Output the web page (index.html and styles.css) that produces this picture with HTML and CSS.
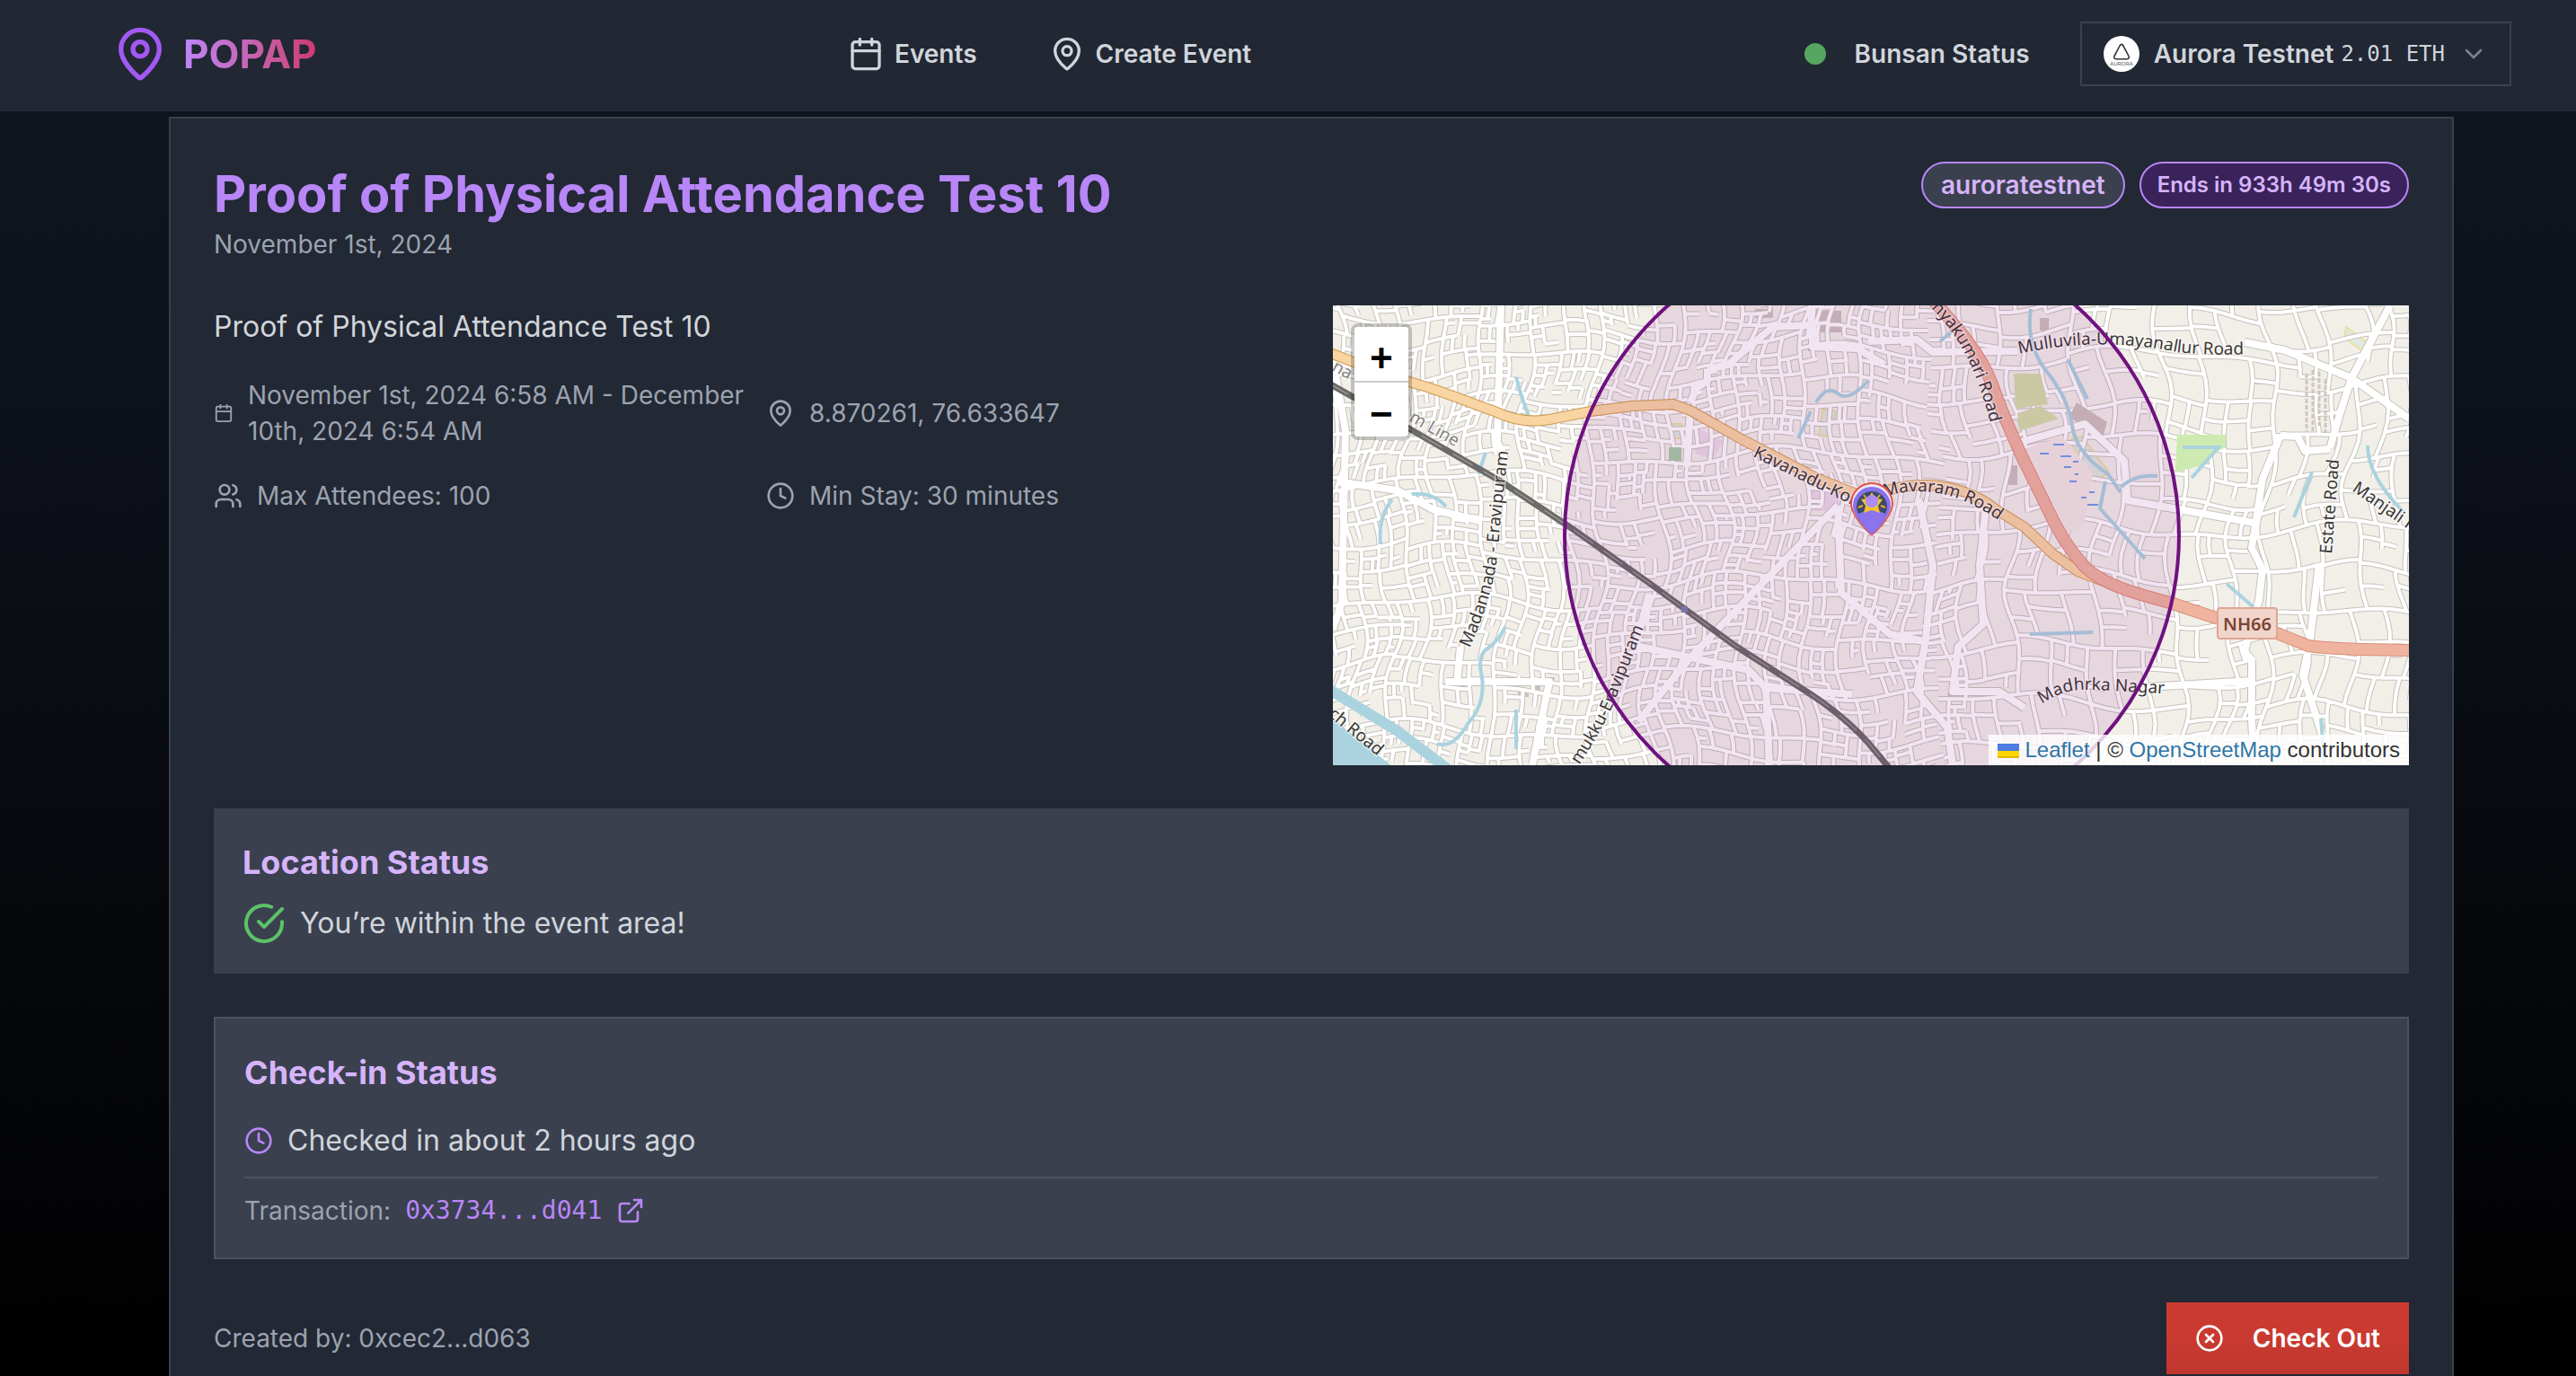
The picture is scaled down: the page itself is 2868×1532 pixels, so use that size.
FILE: index.html
```html
<!DOCTYPE html>
<html lang="en">
<head>
<meta charset="utf-8">
<meta name="viewport" content="width=device-width, initial-scale=1">
<title>POPAP – Proof of Physical Attendance Test 10</title>
<link rel="stylesheet" href="styles.css">
</head>
<body>
<svg class="sprite" aria-hidden="true">
  <symbol id="i-pin" viewBox="0 0 24 24"><path d="M20 10c0 4.993-5.539 10.193-7.399 11.799a1 1 0 0 1-1.202 0C9.539 20.193 4 14.993 4 10a8 8 0 0 1 16 0"/><circle cx="12" cy="10" r="3"/></symbol>
  <symbol id="i-calendar" viewBox="0 0 24 24"><path d="M8 2v4M16 2v4M3 10h18"/><rect x="3" y="4" width="18" height="18" rx="2"/></symbol>
  <symbol id="i-clock" viewBox="0 0 24 24"><circle cx="12" cy="12" r="10"/><path d="M12 6v6l4 2"/></symbol>
  <symbol id="i-users" viewBox="0 0 24 24"><path d="M16 21v-2a4 4 0 0 0-4-4H6a4 4 0 0 0-4 4v2"/><circle cx="9" cy="7" r="4"/><path d="M22 21v-2a4 4 0 0 0-3-3.87M16 3.13a4 4 0 0 1 0 7.75"/></symbol>
  <symbol id="i-check" viewBox="0 0 24 24"><path d="M22 11.08V12a10 10 0 1 1-5.93-9.14"/><path d="m9 11 3 3L22 4"/></symbol>
  <symbol id="i-external" viewBox="0 0 24 24"><path d="M15 3h6v6M10 14 21 3M18 13v6a2 2 0 0 1-2 2H5a2 2 0 0 1-2-2V8a2 2 0 0 1 2-2h6"/></symbol>
  <symbol id="i-x" viewBox="0 0 24 24"><circle cx="12" cy="12" r="10"/><path d="m15 9-6 6M9 9l6 6"/></symbol>
  <symbol id="i-chevron" viewBox="0 0 24 24"><path d="m6 9 6 6 6-6"/></symbol>
</svg>

<header class="topbar">
  <a class="logo" href="#"><svg class="icon logo-icon"><use href="#i-pin"/></svg><span class="logo-text">POPAP</span></a>
  <nav class="nav">
    <a class="nav-link" href="#events"><svg class="icon icon-nav"><use href="#i-calendar"/></svg>Events</a>
    <a class="nav-link" href="#create"><svg class="icon icon-nav"><use href="#i-pin"/></svg>Create Event</a>
  </nav>
  <div class="tools">
    <button class="status" type="button"><span class="dot"></span>Bunsan Status</button>
    <button class="network" type="button">
      <svg class="avatar" viewBox="0 0 40 40" aria-hidden="true"><circle cx="20" cy="20" r="20" fill="#fff"/><path d="M18.300 10.500c.8-1.500 2.600-1.500 3.400 0l6.300 12c.8 1.500 0 3.200-1.700 3.200H13.700c-1.700 0-2.500-1.700-1.700-3.200z" fill="none" stroke="#333" stroke-width="1.600"/><text x="20" y="33" text-anchor="middle" class="avatar-text">AURORA</text></svg>
      <span class="network-name">Aurora Testnet <span class="balance">2.01 ETH</span></span>
      <svg class="icon icon-md chevron"><use href="#i-chevron"/></svg>
    </button>
  </div>
</header>

<main class="page">
  <article class="card">
    <div class="card-head">
      <div>
        <h1 class="title">Proof of Physical Attendance Test 10</h1>
        <p class="muted">November 1st, 2024</p>
      </div>
      <div class="badges"><span class="badge">auroratestnet</span><span class="badge badge-time">Ends in 933h 49m 30s</span></div>
    </div>

    <div class="overview">
      <div class="info">
        <p class="lead">Proof of Physical Attendance Test 10</p>
        <ul class="details">
          <li><svg class="icon icon-sm"><use href="#i-calendar"/></svg><span>November 1st, 2024 6:58 AM - December<br>10th, 2024 6:54 AM</span></li>
          <li><svg class="icon icon-md"><use href="#i-pin"/></svg>8.870261, 76.633647</li>
          <li><svg class="icon icon-md"><use href="#i-users"/></svg>Max Attendees: 100</li>
          <li><svg class="icon icon-md"><use href="#i-clock"/></svg>Min Stay: 30 minutes</li>
        </ul>
      </div>

      <div class="map">
        <svg class="map-canvas" viewBox="0 0 1198 512" preserveAspectRatio="xMidYMid slice" role="img" aria-label="Event location map">
          <defs>
            <g id="main-streets">
              <path d="M187 0 183 152 192 172M4 196 72 206 111 227 164 240M0 60 14 140 10 330 0 360M126 419H241L222 512M138 420 142 380M417 71 440 66 474 37 490 24 532 22 534 0M534 22v24l50 2 30 18M398 108 405 92 417 84V71M337 379 463 406 482 426 578 433M340 463 398 392 562 223M352 321 337 379M398 117 394 180M482 426 486 512M562 223 566 320 620 366 662 375"/>
              <path d="M1177 0 1134 81 1122 118 1110 159M1098 287 1088 372 1080 412 1102 480V512M1055 145 1035 193 1023 270 1035 294 1031 328 1015 385 1023 395V463L1026 512M1015 41 1060 50 1134 81 1198 126M885 217 1031 243M766 152 837 132 881 173 885 220M596 40 650 38 668 52 762 51M906 425 1023 418M1055 145 1074 146 1082 162 1110 160M652 215 668 290 660 372 650 430 684 470 690 512M728 215 720 290 724 355 696 380 690 430 742 430 770 448"/>
            </g>
            <g id="side-streets"><path class="street-mesh"/></g>
            <path id="trunk" d="M668-6C700 30 722 56 734 88 748 128 756 142 766 166L794 223C806 250 820 272 837 291 856 310 890 320 932 331L983 348 1051 365 1086 379C1120 384 1160 383 1204 384"/>
            <path id="secondary" d="M-6 52 23 63 88 86C125 96 150 108 180 118 205 130 225 130 241 127L287 118 333 112 379 110 398 117 455 149 540 193 596 215C615 205 635 200 659 200 690 200 720 212 738 227L770 247 802 277 829 296 860 308"/>
            <path id="rail" d="M-6 86 88 139 187 196 264 247 352 309 448 379 532 433Q570 458 596 487L622 518"/>
            <path id="l1" d="M152 382Q180 320 184 270T198 140"/>
            <path id="l2" d="M274 512Q302 470 314 440T350 348"/>
            <path id="l3" d="M467 168 610 238"/>
            <path id="l4" d="M614 213Q680 192 750 246"/>
            <path id="l5" d="M666 3Q716 50 736 150"/>
            <path id="l6" d="M764 54Q850 34 940 52 980 57 1050 53"/>
            <path id="l7" d="M1112 277 1122 150"/>
            <path id="l8" d="M1134 206 1230 272"/>
            <path id="l9" d="M789 444Q812 428 836 428T950 434"/>
            <path id="l10" d="M-14 450 72 520"/>
            <path id="l11" d="M84 128 165 174"/>
          </defs>
          <rect width="1198" height="512" fill="#f2efe9"/>
          <g fill="#ebdbe8"><path d="M403 135l32 16-12 20-20-6zM530 205h36v24h-32z"/></g>
          <g fill="#dfeade" stroke="#e8e0a0" stroke-width="2"><path d="M378 132h10v16h-8zM545 116l16 2-10 28-10-2zM820 150l14-4 30 40-16 10zM1128 24l24 18-4 10-22-16z"/></g>
          <g fill="#ccc1ba"><path d="M787 14h10v14h-10zM206 428h12v8h-12zM222 424h9v8h-9zM752 178h10v22h-10zM538 6h28v24h-28zM470 4h20v10h-20z"/></g>
          <use href="#side-streets" class="casing casing-side"/>
          <use href="#main-streets" class="casing casing-main"/>
          <use href="#side-streets" class="fill-side"/>
          <path d="M758 76h30l8 34-36 5zM762 120l26-8 20 14-44 14z" fill="#d3e0a8"/><path d="M940 144h54v14l-20 10-6 10-30 8z" fill="#cdebb0"/><path d="M374 158h14v15h-14z" fill="#a8cda8"/>
          <path d="M828 108l34 22-6 20-36-26z" fill="#ccc1ba"/>
          <path d="M768 160l44-14 34 40-10 60-28 10z" fill="#f2e9e4"/>
          <use href="#main-streets" class="fill-main"/>
          <path d="M1084 76v64M1091 72v70M1098 74v60M1105 82v60" stroke="#cfc6bf" stroke-width="3" stroke-dasharray="5 2"/>
          <path d="M-10 424 72 474 130 518M-10 460 60 516H-10Z" fill="#aad3df" stroke="#aad3df" stroke-width="12"/>
          <path class="water" d="M192 358q-8 16-20 24t-6 32q4 30-16 52-16 28-34 22M88 210q24-2 38 14M66 216q-16 20-13 50M204 80q8 30 14 42M204 450v44M170 164l-8 24M538 108q12-20 24-10t34-14M532 118l-14 30M777 4q-6 40 18 70t28 60 40 54l14 20M860 196l-6 30 50 56M818 60l22 44M878 202q14-14 40-12M776 366l70-2M995 310l30 26M1192 230q-40-40-40-74M1070 236l20-50M946 158h40l-30 34M700 20l-24 20M1100 460l4 50"/>
          <path d="M802 155h12M787 165h10M810 168h12M824 174h6M814 180h8M826 188h4M820 196h8M842 208h6M833 214h6M840 222h12" stroke="#6f9fe8" stroke-width="2"/>
          <use href="#secondary" class="secondary-casing"/><use href="#secondary" class="secondary-fill"/>
          <use href="#trunk" class="trunk-casing"/><use href="#trunk" class="trunk-fill"/>
          <use href="#rail" class="rail"/><use href="#rail" class="rail-gap"/>
          <path d="M388 335h7v7h-7z" fill="#7981b0"/>
          <g class="map-label">
            <text><textPath href="#l1">Madannada - Eravipuram</textPath></text>
            <text><textPath href="#l2">mukku-Eravipuram</textPath></text>
            <text><textPath href="#l3">Kavanadu-Koll</textPath></text>
            <text><textPath href="#l4">Mavaram Road</textPath></text>
            <text><textPath href="#l5">nyakumari Road</textPath></text>
            <text><textPath href="#l6">Mulluvila-Umayanallur Road</textPath></text>
            <text><textPath href="#l7">Estate Road</textPath></text>
            <text><textPath href="#l8">Manjali R</textPath></text>
            <text><textPath href="#l9">Madhrka Nagar</textPath></text>
            <text><textPath href="#l10">ach Road</textPath></text>
            <text class="rail-label"><textPath href="#l11">m Line</textPath></text>
            <text class="rail-label" x="-2" y="72" transform="rotate(28 -2 72)">na</text>
          </g>
          <rect x="985" y="337" width="66" height="34" rx="3" fill="#f1d5cb" stroke="#dea594" stroke-width="2"/>
          <text class="shield" x="1018" y="362" text-anchor="middle">NH66</text>
          <circle cx="600" cy="256" r="342" fill="#800080" fill-opacity=".1" stroke="#6f117f" stroke-width="4"/>
          <g>
            <path d="M600 256c-3 0-24-22-24-35a24 24 0 0 1 48 0c0 13-21 35-24 35z" fill="#e05345"/>
            <path d="M600 254c-2 0-22-20-22-33a22 22 0 0 1 44 0c0 13-20 33-22 33z" fill="#eee6fb"/>
            <path d="M600 255c-2 0-21-20-21-32a21 21 0 0 1 42 0c0 12-19 32-21 32z" fill="#8871ea"/>
            <path d="M585 232a17 17 0 1 1 30 0q-15-8-30 0z" fill="#3a4b68"/>
            <path d="m600 208 4 7 8 1-5 7 2 8-9-3-9 3 2-8-5-7 8-1z" fill="#f2c230"/>
            <path d="m585 225 5-2M591 211l3 4M609 211l-3 4M615 225l-5-2" stroke="#f0a733" stroke-width="2"/>
            <circle cx="600" cy="218" r="7" fill="#b18bf4"/><path d="M587 236q13-14 26 0l-13 17z" fill="#8c74ed"/>
          </g>
        </svg>
        <div class="zoom"><button type="button" aria-label="Zoom in">+</button><button type="button" aria-label="Zoom out">−</button></div>
        <p class="attribution"><svg class="flag" viewBox="0 0 12 8" aria-hidden="true"><path fill="#4c7be1" d="M0 0h12v4H0z"/><path fill="#ffd500" d="M0 4h12v3H0z"/><path fill="#e0bc00" d="M0 7h12v1H0z"/></svg> <a href="#leaflet">Leaflet</a> | © <a href="#osm">OpenStreetMap</a> contributors</p>
      </div>
    </div>

    <section class="panel">
      <h2 class="panel-title">Location Status</h2>
      <p class="panel-row"><svg class="icon icon-lg ok"><use href="#i-check"/></svg>You’re within the event area!</p>
    </section>

    <section class="panel panel-bordered">
      <h2 class="panel-title">Check-in Status</h2>
      <p class="panel-row checked"><svg class="icon icon-md accent"><use href="#i-clock"/></svg>Checked in about 2 hours ago</p>
      <p class="transaction">Transaction: <a class="hash" href="#tx">0x3734...d041<svg class="icon icon-md"><use href="#i-external"/></svg></a></p>
    </section>

    <footer class="card-foot">
      <p class="muted">Created by: 0xcec2...d063</p>
      <button class="checkout" type="button"><svg class="icon icon-md"><use href="#i-x"/></svg>Check Out</button>
    </footer>
  </article>
</main>
<script src="map.js"></script>
</body>
</html>
```
FILE: styles.css
```css
* { box-sizing: border-box; }
body {
  margin: 0;
  min-height: 100vh;
  overflow: hidden;
  background: linear-gradient(#111520, #0d111a 30%, #000) fixed;
  color: #d1d5db;
  font: 28px/40px Inter, "Liberation Sans", sans-serif;
}
h1, h2, p, ul { margin: 0; padding: 0; }
a { color: inherit; text-decoration: none; }
button { font: inherit; color: inherit; background: none; border: 0; padding: 0; }
.sprite { display: none; }

.icon { flex: none; fill: none; stroke: currentColor; stroke-width: 2; stroke-linecap: round; stroke-linejoin: round; }
.icon-sm { width: 22px; height: 32px; }
.icon-md { width: 32px; height: 32px; }
.icon-nav { width: 40px; height: 40px; }
.icon-lg { width: 48px; height: 48px; }

.topbar {
  display: flex; align-items: center; justify-content: space-between;
  height: 124px; padding: 0 72px 4px 124px;
  background: #212733; font-weight: 600;
}
.logo { display: flex; align-items: center; gap: 16px; }
.logo-icon { width: 64px; height: 64px; color: #a259f2; }
.logo-text {
  font-size: 44px; line-height: 56px; font-weight: 700; color: transparent;
  background: linear-gradient(90deg, #bf86fa, #c9528f 75%, #cc3a70);
  -webkit-background-clip: text; background-clip: text;
}
.nav { display: flex; gap: 80px; }
.nav-link { display: flex; align-items: center; gap: 12px; }
.tools { display: flex; align-items: center; gap: 56px; }
.status { display: flex; align-items: center; gap: 32px; padding-left: 24px; }
.dot { width: 24px; height: 24px; border-radius: 50%; background: #56a661; }
.network { display: flex; align-items: center; gap: 16px; height: 72px; padding: 0 24px; border: 2px solid #3b414d; }
.avatar { width: 40px; height: 40px; }
.avatar-text { font: 6px "Liberation Sans", sans-serif; fill: #555; }
.network-name { display: flex; align-items: center; gap: 8px; }
.balance { font: 24px/40px "DejaVu Sans Mono", monospace; }
.chevron { color: #7b808a; }

.page { padding: 6px 136px 48px 188px; }
.card { display: flex; flex-direction: column; gap: 48px; padding: 48px; background: #222834; border: 2px solid #39414d; }
.card-head { display: flex; justify-content: space-between; align-items: flex-start; }
.title { font-size: 56px; line-height: 72px; font-weight: 700; color: #b886f7; }
.muted { color: #9ca3af; }
.badges { display: flex; gap: 16px; }
.badge {
  display: flex; align-items: center; height: 52px; padding: 0 20px;
  border: 2px solid #b886f7; border-radius: 26px;
  background: #3a404e; color: #d6b4fa; font-weight: 600;
}
.badge-time { padding: 0 18px; background: #39235a; font-size: 24px; }

.overview { display: grid; grid-template-columns: 1fr 1fr; gap: 48px; }
.info { min-width: 0; }
.lead { font-size: 32px; line-height: 48px; }
.details { display: grid; grid-template-columns: 1fr 1fr; gap: 32px; margin-top: 32px; list-style: none; color: #9ca3af; }
.details li { display: flex; align-items: center; gap: 16px; white-space: nowrap; min-width: 0; }

.map { position: relative; height: 512px; overflow: hidden; }
.map-canvas { display: block; width: 100%; height: 100%; fill: none; }
.casing { stroke: #c6c1bb; }
.casing-side { stroke-width: 6; }
.casing-main { stroke-width: 10; }
.fill-side { stroke: #fff; stroke-width: 4; }
.fill-main { stroke: #fff; stroke-width: 8; stroke-linejoin: round; }
.water { stroke: #aad3df; stroke-width: 4; }
.secondary-casing { stroke: #cf9b50; stroke-width: 12; }
.secondary-fill { stroke: #f8d5a3; stroke-width: 10; }
.trunk-casing { stroke: #dc8d76; stroke-width: 14; }
.trunk-fill { stroke: #efb4a0; stroke-width: 12; }
.rail { stroke: #6c6b69; stroke-width: 7; }
.rail-gap { stroke: #b3b1ad; stroke-width: 1; stroke-dasharray: 26 14; }
.map-label { font: 19px "Noto Sans", sans-serif; fill: #3b3735; stroke: #fff; stroke-opacity: .5; stroke-width: 3; paint-order: stroke; }
.rail-label { fill: #858380; }
.shield { font: 600 20px "Noto Sans", sans-serif; fill: #7b4434; }
.zoom { position: absolute; top: 20px; left: 20px; border: 4px solid rgba(0, 0, 0, .2); border-radius: 8px; background-clip: padding-box; }
.zoom button { display: block; width: 60px; height: 60px; background: #fff; color: #000; font: 700 44px/60px "Liberation Mono", monospace; padding-top: 8px; overflow: hidden; }
.zoom button:first-child { height: 62px; border-bottom: 2px solid #ccc; border-radius: 4px 4px 0 0; }
.zoom button:last-child { border-radius: 0 0 4px 4px; }
.attribution { position: absolute; right: 0; bottom: 0; padding: 0 10px; background: rgba(255, 255, 255, .8); color: #333; font: 24px/34px "Liberation Sans", sans-serif; }
.attribution a { color: #2f76a6; }
.flag { width: 24px; height: 18px; vertical-align: -2px; }

.panel { padding: 32px; background: #3a404e; }
.panel-bordered { border: 2px solid #4b5260; }
.panel-title { margin-bottom: 16px; font-size: 36px; line-height: 56px; font-weight: 700; color: #d6b4fa; }
.panel-row { display: flex; align-items: center; gap: 16px; font-size: 32px; line-height: 48px; }
.ok { color: #5cc268; }
.accent { color: #b886f7; }
.checked { margin-top: 24px; padding-bottom: 16px; border-bottom: 2px solid #4b5260; }
.transaction { display: flex; gap: 16px; padding-top: 16px; color: #9ca3af; }
.hash { display: flex; align-items: center; gap: 16px; color: #b886f7; font-family: "DejaVu Sans Mono", monospace; }

.card-foot { display: flex; justify-content: space-between; align-items: center; }
.checkout { display: flex; align-items: center; gap: 32px; height: 80px; padding: 0 32px; background: linear-gradient(#cb3a31 40%, #c0372f); color: #fff; font-weight: 600; }
```
FILE: map.js
```javascript
// Builds the network of residential streets by splitting the town into ever smaller blocks.
let seed = 41;
const random = () => (seed = (seed * 16807) % 2147483647) / 2147483647;
const parts = [];

function warp(x, y) {
  return [
    x + 9 * Math.sin(y / 47 + x / 190) + 5 * Math.sin(y / 19 + x / 60),
    y + 9 * Math.sin(x / 53 + y / 140) + 4 * Math.sin(x / 23 - y / 40),
  ];
}

function street(x1, y1, x2, y2) {
  const steps = Math.max(2, Math.round(Math.hypot(x2 - x1, y2 - y1) / 12));
  let d = "";
  for (let i = 0; i <= steps; i++) {
    const [x, y] = warp(x1 + ((x2 - x1) * i) / steps, y1 + ((y2 - y1) * i) / steps);
    d += (i ? "L" : "M") + x.toFixed(1) + " " + y.toFixed(1);
  }
  parts.push(d);
}

function split(x, y, w, h) {
  const limit = x + w / 2 > 700 ? 38 : 22;
  if (Math.max(w, h) < limit * (0.7 + random() * 0.9)) return;
  const at = 0.32 + random() * 0.36;
  const reach = random() < 0.35 && Math.max(w, h) < 90 ? 0.6 : 1;
  if (w > h) {
    street(x + w * at, y, x + w * at, y + h * reach);
    split(x, y, w * at, h);
    split(x + w * at, y, w * (1 - at), h);
  } else {
    street(x, y + h * at, x + w * reach, y + h * at);
    split(x, y, w, h * at);
    split(x, y + h * at, w, h * (1 - at));
  }
}

split(-30, -30, 700, 580);
split(670, -30, 560, 580);
document.querySelector(".street-mesh").setAttribute("d", parts.join(""));
```
